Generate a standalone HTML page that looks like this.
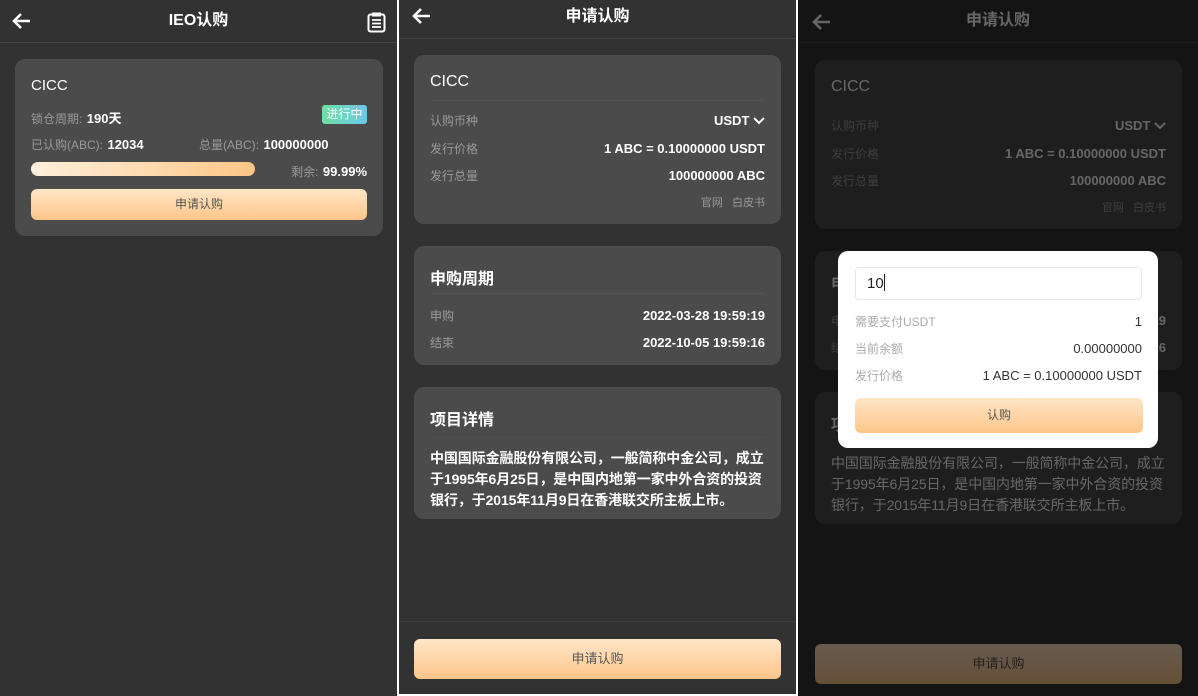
<!DOCTYPE html>
<html><head><meta charset="utf-8"><style>
*{margin:0;padding:0;box-sizing:border-box}
body{width:1198px;height:696px;background:#fff;font-family:"Liberation Sans","Noto Sans CJK SC",sans-serif;position:relative;overflow:hidden;color:#fff}
.p{position:absolute;top:0;height:696px;background:#323232;overflow:hidden}
.abs{position:absolute}
.hd{position:absolute;left:0;right:0;top:0;border-bottom:1px solid #444;text-align:center;font-size:16px;font-weight:bold}
.card{position:absolute;background:#4b4b4b;border-radius:10px}
.lbl{color:#9a9a9a;font-size:12px}
.val{font-weight:bold;font-size:13px;color:#fff}
.row{position:absolute;left:16px;right:16px;display:flex;justify-content:space-between;align-items:center}
.btn{position:absolute;border-radius:6px;background:linear-gradient(180deg,#ffe6c7,#fdc589);color:#555;text-align:center;font-size:12px}
.ttl{position:absolute;left:16px;font-size:16px;font-weight:bold}
.sep{position:absolute;left:16px;right:16px;height:1px;background:#525252}
.det{position:absolute;left:16px;width:340px;top:61px;font-size:14px;line-height:21px;letter-spacing:-0.1px}
</style></head><body>

<!-- Panel 1 -->
<div class="p" style="left:0;width:397px">
  <div class="hd" style="height:43px;line-height:42px">IEO认购</div>
  <svg class="abs" style="left:11px;top:12px" width="20" height="18" viewBox="0 0 20 18"><path d="M19 9H3M10 2L3 9l7 7" stroke="#fff" stroke-width="2.6" fill="none"/></svg>
  <svg class="abs" style="left:367px;top:12px" width="19" height="21" viewBox="0 0 19 21"><rect x="1.5" y="2.5" width="16" height="17" rx="2" stroke="#fff" stroke-width="2" fill="none"/><rect x="5" y="0.5" width="9" height="4" fill="#fff"/><path d="M5 8h9M5 11.5h9M5 15h9" stroke="#fff" stroke-width="1.8"/></svg>
  <div class="card" style="left:15px;top:59px;width:368px;height:177px">
    <div class="abs" style="left:16px;top:18px;font-size:15px">CICC</div>
    <div class="abs" style="left:16px;top:49px"><span class="lbl">锁仓周期:</span> <span class="val">190天</span></div>
    <div class="abs" style="right:16px;top:46px;width:45px;height:19px;border-radius:3px;background:linear-gradient(90deg,#6fe0a5,#6cc8e8);font-size:12px;line-height:19px;text-align:center">进行中</div>
    <div class="abs" style="left:16px;top:77px"><span class="lbl">已认购(ABC):</span> <span class="val">12034</span></div>
    <div class="abs" style="left:184px;top:77px"><span class="lbl">总量(ABC):</span> <span class="val">100000000</span></div>
    <div class="abs" style="left:16px;top:103px;width:224px;height:14px;border-radius:7px;background:linear-gradient(90deg,#fff0dc,#fcc686)"></div>
    <div class="abs" style="right:16px;top:104px"><span class="lbl">剩余:</span> <span class="val">99.99%</span></div>
    <div class="btn" style="left:16px;right:16px;top:130px;height:31px;line-height:31px">申请认购</div>
  </div>
</div>
<div class="abs" style="left:397px;top:0;width:2px;height:696px;background:#fff"></div>

<!-- Panel 2 -->
<div class="p" style="left:399px;width:397px;height:694px">
  <div class="hd" style="height:39px;line-height:34px">申请认购</div>
  <svg class="abs" style="left:12px;top:7px" width="20" height="18" viewBox="0 0 20 18"><path d="M19 9H3M10 2L3 9l7 7" stroke="#fff" stroke-width="2.6" fill="none"/></svg>
  <div class="card" style="left:15px;top:55px;width:367px;height:169px">
    <div class="abs" style="left:16px;top:18px;font-size:16px">CICC</div>
    <div class="sep" style="top:45px"></div>
    <div class="row" style="top:57px"><span class="lbl">认购币种</span><span class="val">USDT <svg width="12" height="8" viewBox="0 0 12 8"><path d="M1 1l5 5 5-5" stroke="#fff" stroke-width="2" fill="none"/></svg></span></div>
    <div class="row" style="top:85px"><span class="lbl">发行价格</span><span class="val">1 ABC = 0.10000000 USDT</span></div>
    <div class="row" style="top:112px"><span class="lbl">发行总量</span><span class="val">100000000 ABC</span></div>
    <div class="abs lbl" style="right:16px;top:139px;font-size:11px">官网 &nbsp;&nbsp;白皮书</div>
  </div>
  <div class="card" style="left:15px;top:246px;width:367px;height:119px">
    <div class="ttl" style="top:19px">申购周期</div>
    <div class="sep" style="top:47px"></div>
    <div class="row" style="top:61px"><span class="lbl">申购</span><span class="val">2022-03-28 19:59:19</span></div>
    <div class="row" style="top:88px"><span class="lbl">结束</span><span class="val">2022-10-05 19:59:16</span></div>
  </div>
  <div class="card" style="left:15px;top:387px;width:367px;height:132px">
    <div class="ttl" style="top:19px">项目详情</div>
    <div class="sep" style="top:50px;background:#4f4f4f"></div>
    <div class="det" style="font-weight:bold">中国国际金融股份有限公司，一般简称中金公司，成立<br>于1995年6月25日，是中国内地第一家中外合资的投资<br>银行，于2015年11月9日在香港联交所主板上市。</div>
  </div>
  <div class="abs" style="left:0;right:0;top:621px;height:1px;background:#3c3c3c"></div>
  <div class="btn" style="left:15px;width:367px;top:639px;height:40px;line-height:40px;font-size:13px">申请认购</div>
</div>
<div class="abs" style="left:796px;top:0;width:2px;height:696px;background:#fff"></div>

<!-- Panel 3 -->
<div class="p" style="left:798px;width:400px">
  <div class="hd" style="height:43px;line-height:42px">申请认购</div>
  <svg class="abs" style="left:13px;top:13px" width="20" height="18" viewBox="0 0 20 18"><path d="M19 9H3M10 2L3 9l7 7" stroke="#fff" stroke-width="2.6" fill="none"/></svg>
  <div class="card" style="left:17px;top:60px;width:367px;height:169px">
    <div class="abs" style="left:16px;top:18px;font-size:16px">CICC</div>
    <div class="row" style="top:57px"><span class="lbl">认购币种</span><span class="val">USDT <svg width="12" height="8" viewBox="0 0 12 8"><path d="M1 1l5 5 5-5" stroke="#fff" stroke-width="2" fill="none"/></svg></span></div>
    <div class="row" style="top:85px"><span class="lbl">发行价格</span><span class="val">1 ABC = 0.10000000 USDT</span></div>
    <div class="row" style="top:112px"><span class="lbl">发行总量</span><span class="val">100000000 ABC</span></div>
    <div class="abs lbl" style="right:16px;top:139px;font-size:11px">官网 &nbsp;&nbsp;白皮书</div>
  </div>
  <div class="card" style="left:17px;top:251px;width:367px;height:119px">
    <div class="ttl" style="top:19px">申购周期</div>
    <div class="row" style="top:61px"><span class="lbl">申购</span><span class="val">2022-03-28 19:59:19</span></div>
    <div class="row" style="top:88px"><span class="lbl">结束</span><span class="val">2022-10-05 19:59:16</span></div>
  </div>
  <div class="card" style="left:17px;top:392px;width:367px;height:132px">
    <div class="ttl" style="top:19px">项目详情</div>
    <div class="det">中国国际金融股份有限公司，一般简称中金公司，成立<br>于1995年6月25日，是中国内地第一家中外合资的投资<br>银行，于2015年11月9日在香港联交所主板上市。</div>
  </div>
  <div class="btn" style="left:17px;width:367px;top:644px;height:40px;line-height:40px;font-size:13px">申请认购</div>
  <div class="abs" style="left:0;top:0;width:400px;height:696px;background:rgba(0,0,0,0.6)"></div>
  <div class="abs" style="left:40px;top:251px;width:320px;height:197px;background:#fff;border-radius:10px;color:#333">
    <div class="abs" style="left:17px;top:16px;width:287px;height:33px;border:1px solid #e6e6e6;border-radius:4px;font-size:15px;line-height:31px;padding-left:11px;color:#222">10<span style="display:inline-block;width:1px;height:17px;background:#222;vertical-align:-3px"></span></div>
    <div class="abs" style="left:17px;right:16px;top:62px;display:flex;justify-content:space-between;align-items:center;font-size:12px"><span style="color:#aaa">需要支付USDT</span><span style="font-size:13px">1</span></div>
    <div class="abs" style="left:17px;right:16px;top:89px;display:flex;justify-content:space-between;align-items:center;font-size:12px"><span style="color:#aaa">当前余额</span><span style="font-size:13px">0.00000000</span></div>
    <div class="abs" style="left:17px;right:16px;top:116px;display:flex;justify-content:space-between;align-items:center;font-size:12px"><span style="color:#aaa">发行价格</span><span style="font-size:13px">1 ABC = 0.10000000 USDT</span></div>
    <div class="btn" style="left:17px;width:288px;top:147px;height:35px;line-height:35px">认购</div>
  </div>
</div>
</body></html>
